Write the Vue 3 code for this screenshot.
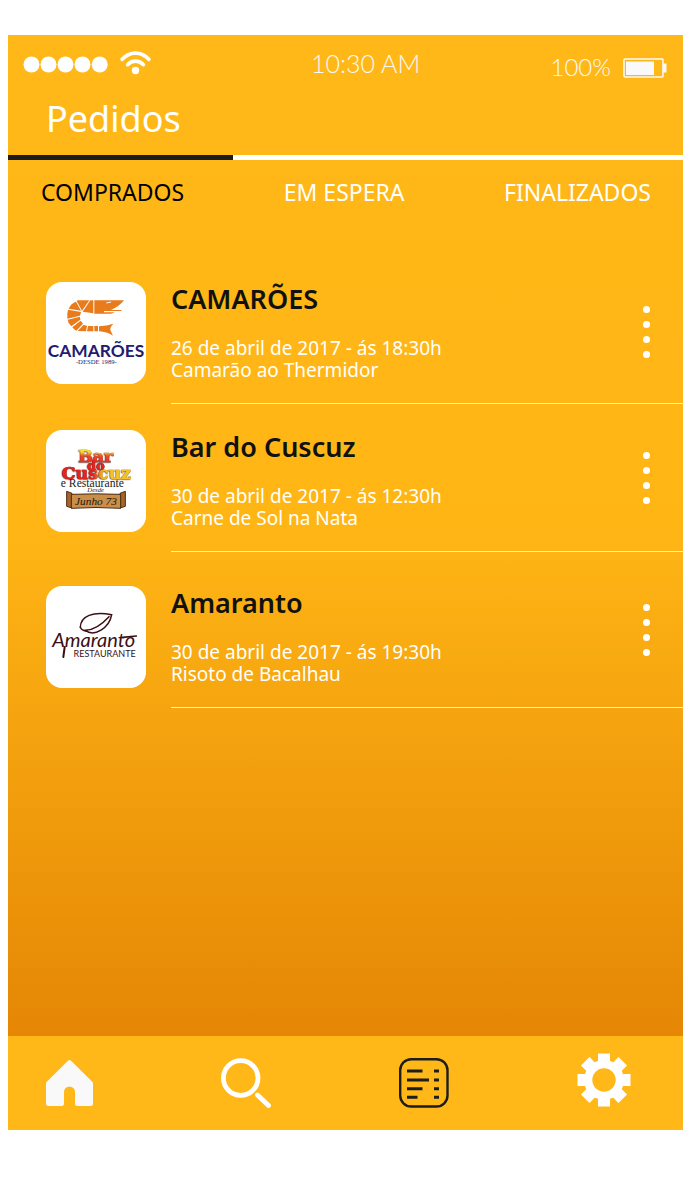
<script setup>
import { ref } from 'vue'

const tabs = ['COMPRADOS', 'EM ESPERA', 'FINALIZADOS']
const activeTab = ref(0)

const orders = [
  { logo: 'camaroes', name: 'CAMARÕES', date: '26 de abril de 2017 - ás 18:30h', dish: 'Camarão ao Thermidor' },
  { logo: 'cuscuz', name: 'Bar do Cuscuz', date: '30 de abril de 2017 - ás 12:30h', dish: 'Carne de Sol na Nata' },
  { logo: 'amaranto', name: 'Amaranto', date: '30 de abril de 2017 - ás 19:30h', dish: 'Risoto de Bacalhau' }
]
</script>

<template>
  <div class="phone">
    <header class="header">
      <div class="status">
        <div class="signal">
          <svg width="85" height="20" viewBox="0 0 85 20" fill="#fff" aria-hidden="true">
            <circle cx="8.500" cy="11.500" r="8" /><circle cx="25.500" cy="11.500" r="8" /><circle cx="42.500" cy="11.500" r="8" /><circle cx="59.500" cy="11.500" r="8" /><circle cx="76.700" cy="11.500" r="8" />
          </svg>
          <svg width="31" height="24" viewBox="0 0 31 24" fill="none" stroke="#fff" stroke-width="3.600" stroke-linecap="round" aria-hidden="true">
            <path d="M2.200 8.300C9.500 0 21.500 0 28.800 8.300" />
            <path d="M7.600 13.700C12 8.900 19 8.900 23.400 13.700" />
            <circle cx="15.500" cy="19.500" r="3.700" fill="#fff" stroke="none" />
          </svg>
        </div>
        <span class="clock">10:30 AM</span>
        <div class="battery">
          <span>100%</span>
          <svg width="44" height="21" viewBox="0 0 44 21" aria-hidden="true">
            <rect x="1" y="2" width="39" height="18" rx="1" fill="none" stroke="#f9f9f9" stroke-width="1.600" />
            <rect x="3" y="4.500" width="28" height="13.500" fill="#f9f9f9" />
            <path d="M40 6.500h3.500v9H40z" fill="#f9f9f9" />
          </svg>
        </div>
      </div>
      <h1>Pedidos</h1>
    </header>

    <div class="track">
      <span v-for="(t, i) in tabs" :key="t" :class="{ on: i === activeTab }"></span>
    </div>
    <nav class="tabs" aria-label="Pedidos">
      <button v-for="(t, i) in tabs" :key="t" type="button" :class="{ active: i === activeTab }" @click="activeTab = i">{{ t }}</button>
    </nav>

    <main>
      <ul class="orders">
        <li v-for="o in orders" :key="o.name" class="order">
          <div class="logo">
            <svg v-if="o.logo === 'camaroes'" viewBox="18 21 300 306" aria-hidden="true">
              <g fill="#e87b1c" transform="translate(72 63)">
                <path d="M42 13H76L54 44L38 15z" />
                <path d="M79 13H88V52L56 47z" />
                <path d="M91 13H180Q165 32 141 42H172V45H120V49H152Q148 52 140 53H91z" />
                <path d="M36 17L51 44L14 38Q22 22 36 17z" />
                <path d="M12 41L51 48L48 59L10 68Q9 52 12 41z" />
                <path d="M11 71L48 62L49 71L22 91Q12 83 11 71z" />
                <path d="M25 94L50 74L57 83L37 104Q30 101 25 94z" />
                <path d="M41 105L59 86L69 90L66 106z" />
                <path d="M72 90H88V106H69z" />
                <path d="M91 90H102V106H91z" />
                <path d="M105 91Q130 90 148 83Q136 95 140 104L147 119Q128 107 105 106z" />
              </g>
              <path d="M199 84l14-3" stroke="#fff" stroke-width="3" />
              <text x="168" y="245" text-anchor="middle" class="cam-name">CAMARÕES</text>
              <text x="169" y="267" text-anchor="middle" class="cam-year">-DESDE 1989-</text>
            </svg>

            <svg v-else-if="o.logo === 'cuscuz'" viewBox="18 21 300 306" aria-hidden="true">
              <defs>
                <linearGradient id="bar-fill" x1="0" y1="0" x2="0" y2="1">
                  <stop offset=".3" stop-color="#f7dc35" />
                  <stop offset=".5" stop-color="#ee4a28" />
                  <stop offset="1" stop-color="#e3251f" />
                </linearGradient>
                <linearGradient id="cuscuz-fill" x1="0" y1="0" x2="1" y2="0">
                  <stop offset=".45" stop-color="#e3251f" />
                  <stop offset=".6" stop-color="#f5c22c" />
                </linearGradient>
              </defs>
              <g class="bar-name" text-anchor="middle">
                <text x="167" y="117" fill="url(#bar-fill)" stroke="url(#bar-fill)">Bar</text>
                <text x="168" y="140" fill="#e3251f" stroke="#e3251f" class="bar-do">do</text>
                <text x="169" y="167" fill="url(#cuscuz-fill)" stroke="url(#cuscuz-fill)">Cuscuz</text>
              </g>
              <text x="157" y="193" text-anchor="middle" class="bar-rest">e Restaurante</text>
              <text x="167" y="208" text-anchor="middle" class="bar-since">Desde</text>
              <g stroke="#4b2a10" stroke-width="3" fill="#a8642a">
                <path d="M80 205L96 211V255L80 250z" />
                <path d="M256 205L240 211V255L256 250z" />
                <path d="M94 214Q168 211 242 214V256Q168 251 94 256z" fill="#c98f4a" />
              </g>
              <text x="168" y="246" text-anchor="middle" class="bar-ribbon">Junho 73</text>
            </svg>

            <svg v-else viewBox="18 21 300 306" aria-hidden="true">
              <g fill="none" stroke="#3b1015" stroke-width="4.500" stroke-linecap="round">
                <path d="M121 145C122 110 159 97 215 107C208 147 163 175 136 154C158 153 185 137 207 113" />
                <path d="M121 145Q124 154 139 157" />
                <path d="M74 204L70 234" stroke-width="6" />
                <path d="M248 175L289 171" stroke-width="5" />
              </g>
              <text x="161" y="205" text-anchor="middle" class="ama-name">Amaranto</text>
              <text x="194" y="235" text-anchor="middle" class="ama-rest">RESTAURANTE</text>
            </svg>
          </div>
          <div class="body">
            <div class="info">
              <h2>{{ o.name }}</h2>
              <p>{{ o.date }}<br />{{ o.dish }}</p>
            </div>
            <button type="button" class="more" :aria-label="'Opções de ' + o.name">
              <i></i><i></i><i></i><i></i>
            </button>
          </div>
        </li>
      </ul>
    </main>

    <nav class="bottom" aria-label="Principal">
      <button type="button" aria-label="Início">
        <svg width="47" height="47" viewBox="0 0 47 47" fill="#f9f9f9"><path d="M22 .7Q23.500-.5 25 .7L46.500 22Q47 22.500 47 23.500V43.500Q47 46 44.500 46H31.500Q29 46 29 43.500V32A5.500 5.500 0 0 0 18 32V43.500Q18 46 15.500 46H2.500Q0 46 0 43.500V23.500Q0 22.500.5 22z" /></svg>
      </button>
      <button type="button" aria-label="Buscar">
        <svg width="50" height="50" viewBox="0 0 50 50" fill="none" stroke="#fff"><circle cx="19.700" cy="20" r="17.300" stroke-width="4.800" /><path d="M36.500 37L47.500 47.500" stroke-width="4.800" stroke-linecap="round" /></svg>
      </button>
      <button type="button" aria-label="Pedidos" aria-current="page">
        <svg width="50" height="50" viewBox="0 0 50 50" fill="none" stroke="#1d1d1b"><rect x="1.200" y="1.200" width="47.300" height="47.300" rx="11" stroke-width="2.400" /><path d="M8 13H23.500M35 13H40M8 22H30M35 22H40M8 30.700H23.500M35 30.700H40M8 39.200H18.500M35 39.200H40" stroke-width="3" /></svg>
      </button>
      <button type="button" aria-label="Configurações">
        <svg width="54" height="60" viewBox="-27 -27 54 60">
          <g fill="#fff">
            <path v-for="a in 8" :key="a" :transform="`rotate(${a * 45})`" d="M-6-26.500H6V-15H-6z" />
          </g>
          <circle r="15.800" fill="none" stroke="#fff" stroke-width="8.200" />
        </svg>
      </button>
    </nav>
  </div>
</template>

<style>
body {
  margin: 0;
  background: #fff;
}
</style>

<style scoped>
.phone {
  margin: 35px 8px 54px;
  min-height: calc(100vh - 89px);
  display: flex;
  flex-direction: column;
  background: linear-gradient(#ffb818 0%, #ffb615 45%, #e58705 91%);
  font-family: "Noto Sans", "Open Sans", sans-serif;
  color: #fff;
}
button {
  border: 0;
  padding: 0;
  background: none;
  font: inherit;
  color: inherit;
  cursor: pointer;
}
svg {
  display: block;
}
.header {
  height: 120px;
}
.status {
  display: grid;
  grid-template-columns: 7fr auto 6fr;
  padding: 12px 16px 0 15px;
  font: 300 25px/32px Lato, sans-serif;
  color: #f9f9f9;
}
.signal,
.battery {
  display: flex;
  align-items: center;
  gap: 12px;
}
.signal {
  height: 32px;
}
.battery {
  justify-content: flex-end;
  margin-top: 4px;
  font-size: 24px;
}
h1 {
  margin: 0;
  padding: 2px 38px 0;
  font-size: 36px;
  line-height: 68px;
  font-weight: 400;
}
.track {
  display: grid;
  grid-template-columns: repeat(3, 1fr);
  height: 5px;
}
.track span {
  background: #fff;
}
.track .on {
  background: #1d1d1b;
}
.tabs {
  display: flex;
  justify-content: space-between;
  padding: 16px 32px 16px 33px;
  font-size: 23px;
  line-height: 32px;
}
.tabs .active {
  color: #000;
}
main {
  flex: 1;
}
.orders {
  list-style: none;
  margin: 36px 0 0;
  padding: 0;
}
.order {
  display: flex;
  gap: 25px;
  padding-left: 38px;
}
.logo,
.info {
  margin-top: 22px;
}
.order:nth-child(2) .logo,
.order:nth-child(2) .info {
  margin-top: 26px;
}
.order:nth-child(3) .logo,
.order:nth-child(3) .info {
  margin-top: 34px;
}
.logo {
  width: 100px;
  height: 102px;
  flex: none;
  border-radius: 16px;
  background: #fff;
  overflow: hidden;
}
.body {
  flex: 1;
  display: flex;
  justify-content: space-between;
  align-items: center;
  padding-right: 25px;
  border-bottom: 1px solid #fff3d6;
}
.info {
  height: 121px;
}
h2 {
  margin: 0;
  font-size: 27px;
  line-height: 34px;
  font-weight: 600;
  color: #111;
}
p {
  margin: 21px 0 0;
  font-size: 19px;
  line-height: 22px;
}
.more {
  display: flex;
  flex-direction: column;
  align-items: center;
  gap: 8px;
  width: 24px;
}
.more i {
  width: 7px;
  height: 7px;
  border-radius: 50%;
  background: #fff;
}
.bottom {
  display: flex;
  justify-content: space-between;
  align-items: center;
  height: 94px;
  padding: 0 52px 0 38px;
  background: #ffb818;
}
.cam-name {
  font: 700 52px Lato, sans-serif;
  fill: #241a6e;
}
.cam-year {
  font: 20px "Liberation Serif", serif;
  fill: #241a6e;
}
.bar-name {
  font: 700 52px "DejaVu Serif", serif;
  stroke-width: 2px;
  filter: drop-shadow(-1px 1px 0 #1c1410);
}
.bar-do {
  font-size: 38px;
}
.bar-rest {
  font: 35px "Liberation Serif", serif;
  fill: #222;
}
.bar-since {
  font: italic 20px "Liberation Serif", serif;
  fill: #222;
}
.bar-ribbon {
  font: italic 34px "Liberation Serif", serif;
  fill: #24160a;
}
.ama-name {
  font: italic 60px Lato, sans-serif;
  fill: #3b1015;
}
.ama-rest {
  font: 27px Lato, sans-serif;
  fill: #3b1015;
}
</style>
